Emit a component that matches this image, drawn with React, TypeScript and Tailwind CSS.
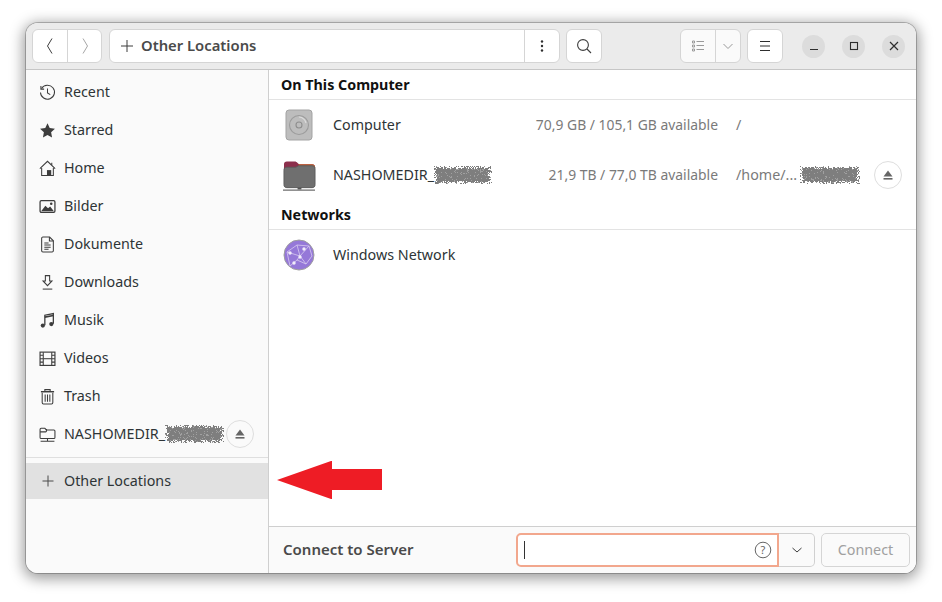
import React from "react";

const ink = "#3d3d3d";
function I({ children, size = 17, className = "" }: { children: React.ReactNode; size?: number; className?: string }) {
  return (
    <svg width={size} height={size} viewBox="0 0 16 16" fill="none" stroke={ink} strokeWidth="1" className={"shrink-0 " + className}>
      {children}
    </svg>
  );
}

function rng(seed: number) {
  let s = seed;
  return () => {
    s = (s * 16807) % 2147483647;
    return s / 2147483647;
  };
}

function Blob({ w, h = 18, seed, className = "" }: { w: number; h?: number; seed: number; className?: string }) {
  const r = rng(seed);
  const dots: React.ReactNode[] = [];
  for (let y = 0; y < h; y++) {
    for (let x = 0; x < w; x++) {
      const ex = Math.min(x, w - 1 - x) / 5;
      const ey = Math.min(y, h - 1 - y) / 4;
      const p = Math.min(1, Math.min(ex, ey) + 0.25);
      if (r() < p) dots.push(<rect key={x + "-" + y} x={x} y={y} width="1" height="1" fill={r() < 0.12 ? "#a0a0a0" : "#7e7e7e"} />);
    }
  }
  return (
    <svg width={w} height={h} viewBox={`0 0 ${w} ${h}`} className={"shrink-0 " + className}>
      {dots}
    </svg>
  );
}

const Eject = () => (
  <svg width="12" height="12" viewBox="0 0 12 12" fill="#666">
    <path d="M6 1.500 10.500 7.500H1.500Z" />
    <rect x="1.500" y="9" width="9" height="1.600" />
  </svg>
);

const sidebarIcons: Record<string, React.ReactNode> = {
  Recent: (
    <I>
      <path d="M2.400 4.200A6.600 6.600 0 1 1 1.400 8" />
      <path d="M1.800 1.800v3h3" />
      <path d="M8 4.200V8.400l2.600 1.600" />
    </I>
  ),
  Starred: (
    <I>
      <path d="M8 1.200l2.100 4.500 4.900.6-3.600 3.400.9 4.900L8 12.200l-4.300 2.400.9-4.900L1 6.300l4.900-.6z" fill={ink} stroke="none" />
    </I>
  ),
  Home: (
    <I>
      <path d="M.8 8.200 8 1.200l7.200 7" />
      <path d="M2.500 7.500v7h11v-7" />
      <path d="M12 2.600v2.200" />
      <rect x="7.500" y="9.500" width="4" height="5" fill={ink} stroke="none" />
    </I>
  ),
  Bilder: (
    <I>
      <rect x="1" y="2.500" width="14" height="11" rx="1.200" strokeWidth="1.200" />
      <path d="M2 12.500 6 7.200l2.500 2.500 2-1.800 3.500 4.600z" fill={ink} stroke="none" />
      <circle cx="11.500" cy="5.500" r="1.200" fill={ink} stroke="none" />
    </I>
  ),
  Dokumente: (
    <I>
      <path d="M2.500 2.200c0-.7.5-1.200 1.200-1.200H10l3.500 3.500v9.300c0 .7-.5 1.200-1.200 1.200H3.700c-.7 0-1.200-.5-1.200-1.200z" />
      <path d="M9.800 1v3.700h3.700" />
      <path d="M5 6.500h4M5 8.500h6M5 10.500h6M5 12.500h4" />
    </I>
  ),
  Downloads: (
    <I>
      <path d="M6 1.500h4v5h2.200L8 11 3.800 6.500H6z" />
      <path d="M3.500 14.200h9" />
    </I>
  ),
  Musik: (
    <I>
      <path d="M5.500 12.500V3l8-1.500v9.500" strokeWidth="1.200" />
      <path d="M5.500 4.800l8-1.500" strokeWidth="1.600" />
      <circle cx="3.600" cy="12.800" r="2" fill={ink} stroke="none" />
      <circle cx="11.600" cy="11.300" r="2" fill={ink} stroke="none" />
    </I>
  ),
  Videos: (
    <I>
      <rect x="1" y="2" width="14" height="12.500" strokeWidth="1.100" />
      <path d="M4 2v12.500M12 2v12.500M1 5h3M1 8.200h3M1 11.400h3M12 5h3M12 8.200h3M12 11.400h3" />
      <path d="M4 8.200h8" />
    </I>
  ),
  Trash: (
    <I>
      <path d="M3 4.500v9.200c0 .7.5 1.300 1.200 1.300h7.600c.7 0 1.200-.6 1.200-1.300V4.500" />
      <path d="M1.800 3.500h12.400" strokeWidth="1.400" />
      <path d="M5.500 3.200V1.500h5v1.700" />
      <path d="M5.800 6v7M8 6v7M10.200 6v7" />
    </I>
  ),
};

function Row({ label }: { label: string }) {
  return (
    <div className="flex h-[38px] items-center pl-[13px]">
      {sidebarIcons[label]}
      <span className="ml-[8px] text-[#2e3436]">{label}</span>
    </div>
  );
}

function RoundBtn({ children }: { children: React.ReactNode }) {
  return <div className="flex h-[23px] w-[23px] items-center justify-center rounded-full bg-[#dcdcdc]">{children}</div>;
}

export default function App() {
  return (
    <div
      className="relative h-[602px] w-[942px] overflow-hidden bg-white pl-[26px] pt-[23px] text-[14.3px] text-[#2c2c2c]"
      style={{ fontFamily: '"Noto Sans", sans-serif' }}
    >
      <div className="flex h-[550px] w-[890px] flex-col overflow-hidden rounded-[12px] bg-white shadow-[0_3px_14px_3px_rgba(0,0,0,0.38),0_0_0_1px_rgba(0,0,0,0.22)]">
        {/* header */}
        <div className="flex h-[47px] shrink-0 items-center border-b border-[#c6c6c6] bg-[#ebebeb] pl-[6px]">
          <div className="flex h-[34px] w-[70px] overflow-hidden rounded-[6px] border border-[#d5d5d5] bg-white">
            <div className="flex w-[35px] items-center justify-center border-r border-[#d5d5d5]">
              <svg width="16" height="16" viewBox="0 0 16 16" fill="none" stroke="#3d3d3d"><path d="M10 .5 5.500 8l4.500 7.500" /></svg>
            </div>
            <div className="flex flex-1 items-center justify-center">
              <svg width="16" height="16" viewBox="0 0 16 16" fill="none" stroke="#a6a6a6"><path d="M6 .5l4.500 7.500L6 15.500" /></svg>
            </div>
          </div>
          <div className="ml-[7px] flex h-[34px] w-[451px] items-center rounded-[6px] border border-[#d5d5d5] bg-white">
            <svg width="14" height="14" viewBox="0 0 14 14" stroke="#3d3d3d" className="ml-[10px]"><path d="M7 1v12M1 7h12" /></svg>
            <span className="ml-[7px] flex-1 pb-[2px] text-[14.8px] font-semibold leading-[21px] text-[#4a4a4a]">Other Locations</span>
            <div className="flex h-full w-[35px] items-center justify-center border-l border-[#d5d5d5]">
              <svg width="4" height="12" viewBox="0 0 4 12" fill="#2e2e2e"><circle cx="2" cy="1.500" r="1.200" /><circle cx="2" cy="6" r="1.200" /><circle cx="2" cy="10.500" r="1.200" /></svg>
            </div>
          </div>
          <div className="ml-[6px] flex h-[34px] w-[36px] items-center justify-center rounded-[6px] border border-[#d5d5d5] bg-white">
            <svg width="16" height="16" viewBox="0 0 16 16" fill="none" stroke="#3d3d3d" strokeWidth="1.100"><circle cx="7" cy="7" r="5.400" /><path d="M11 11l4 4" /></svg>
          </div>
          <div className="ml-[78px] flex h-[34px] w-[61px] overflow-hidden rounded-[6px] border border-[#d5d5d5] bg-[#fafafa]">
            <div className="flex w-[35px] items-center justify-center border-r border-[#d5d5d5]">
              <svg width="14" height="14" viewBox="0 0 14 14" fill="none" stroke="#9a9a9a"><path d="M1.500 2h2v2h-2zM1.500 6h2v2h-2zM1.500 10h2v2h-2zM5.500 2.500H13M5.500 6.500H13M5.500 10.500H13" /></svg>
            </div>
            <div className="flex flex-1 items-center justify-center">
              <svg width="12" height="12" viewBox="0 0 12 12" fill="none" stroke="#9a9a9a"><path d="M1.500 4 6 8.500 10.500 4" /></svg>
            </div>
          </div>
          <div className="ml-[6px] flex h-[34px] w-[36px] items-center justify-center rounded-[6px] border border-[#d5d5d5] bg-white">
            <svg width="12" height="12" viewBox="0 0 12 12" stroke="#2e2e2e"><path d="M1 1.500h10M1 6h10M1 10.500h10" /></svg>
          </div>
          <div className="ml-[19px] flex gap-[17px]">
            <RoundBtn>
              <svg width="10" height="10" viewBox="0 0 10 10" stroke="#2e2e2e" strokeWidth="1.200"><path d="M1 8.500h8" /></svg>
            </RoundBtn>
            <RoundBtn>
              <svg width="10" height="10" viewBox="0 0 10 10" fill="none" stroke="#2e2e2e" strokeWidth="1.100"><rect x="1.500" y="1.500" width="7" height="7" /></svg>
            </RoundBtn>
            <RoundBtn>
              <svg width="10" height="10" viewBox="0 0 10 10" stroke="#2e2e2e" strokeWidth="1.200"><path d="M1 1l8 8M9 1 1 9" /></svg>
            </RoundBtn>
          </div>
        </div>

        <div className="flex min-h-0 flex-1">
          {/* sidebar */}
          <div className="flex w-[243px] shrink-0 flex-col border-r border-[#cfcfcf] bg-[#fafafa] pt-[3px]">
            {["Recent", "Starred", "Home", "Bilder", "Dokumente", "Downloads", "Musik", "Videos", "Trash"].map((l) => (
              <Row key={l} label={l} />
            ))}
            <div className="flex h-[38px] items-center pl-[13px]">
              <I>
                <path d="M1 3.200c0-.6.4-1 1-1h3.500l1.500 1.500H14c.6 0 1 .4 1 1v6.100c0 .6-.4 1-1 1H2c-.6 0-1-.4-1-1z" />
                <path d="M7 2.800v2c0 .4-.3.7-.7.7H1" />
                <path d="M8 12v2M1.500 14.300h13" />
              </I>
              <span className="ml-[8px] text-[#2e3436]">NASHOMEDIR_</span>
              <Blob w={59} seed={77} />
              <div className="ml-[2px] flex h-[28px] w-[28px] items-center justify-center rounded-full border border-[#dedede]">
                <Eject />
              </div>
            </div>
            <div className="mt-[4px] h-px bg-[#dfdfdf]" />
            <div className="mt-[5px] flex h-[36px] items-center bg-[#e1e1e1] pl-[14px]">
              <svg width="16" height="16" viewBox="0 0 16 16" stroke="#4a4a4a"><path d="M8 2.500v11M2.500 8h11" /></svg>
              <span className="ml-[8px] text-[#2e3436]">Other Locations</span>
            </div>
          </div>

          {/* main */}
          <div className="flex min-w-0 flex-1 flex-col bg-white">
            <div className="flex-1">
              <div className="flex h-[30px] items-center border-b border-[#e3e3e3] pl-[12px] font-bold text-[#111]">On This Computer</div>
              <div className="flex h-[50px] items-center">
                <div className="flex w-[64px] justify-center pr-[4px]">
                  <svg width="28" height="32" viewBox="0 0 28 32">
                    <rect x="1" y="1" width="26" height="30" rx="3" fill="#bdbdbd" stroke="#a3a3a3" />
                    <circle cx="14" cy="16" r="9.500" fill="none" stroke="#9c9c9c" strokeWidth="1.100" />
                    <path d="M14 8a8 8 0 0 1 7 6" fill="none" stroke="#dcdcdc" strokeWidth="1.200" />
                    <circle cx="14" cy="16" r="3" fill="none" stroke="#8e8e8e" strokeWidth="1.100" />
                  </svg>
                </div>
                <span className="text-[#2e3436]">Computer</span>
                <span className="ml-auto w-[190px] whitespace-nowrap text-right text-[13.9px] leading-[20px] text-[#7a7a7a]">70,9 GB / 105,1 GB available</span>
                <span className="ml-[18px] w-[180px] text-[#7a7a7a]">/</span>
              </div>
              <div className="flex h-[50px] items-center">
                <div className="flex w-[64px] justify-center pr-[4px]">
                  <svg width="33" height="33" viewBox="0 0 34 33">
                    <path d="M1 5c0-2 1-3 3-3h8c1.500 0 2 .6 3 1.500L16.500 5H30c2 0 3 1 3 3v4H1z" fill="#8c2f4c" />
                    <path d="M16 5h14c2 0 3 1 3 3v2H17z" fill="#c2622f" />
                    <path d="M1 11c0-2 1-3 3-3h9c1 0 2-1 3-1.500h14c2 0 3 1 3 3V26c0 2-1 3-3 3H4c-2 0-3-1-3-3z" fill="#6f6f6f" stroke="#5c5c5c" />
                    <path d="M15 29h4v2h-4z" fill="#555" />
                    <path d="M0 31.500h33" stroke="#6c6c6c" strokeWidth="1.400" />
                  </svg>
                </div>
                <span className="text-[#2e3436]">NASHOMEDIR_</span>
                <Blob w={58} seed={901} />
                <span className="ml-auto w-[185px] whitespace-nowrap text-right text-[13.9px] leading-[20px] text-[#7a7a7a]">21,9 TB / 77,0 TB available</span>
                <span className="ml-[18px] flex w-[180px] items-center text-[#7a7a7a]">
                  /home/...
                  <Blob w={60} seed={4242} className="ml-[3px]" />
                  <span className="ml-[14px] flex h-[28px] w-[28px] shrink-0 items-center justify-center rounded-full border border-[#dedede]">
                    <Eject />
                  </span>
                </span>
              </div>
              <div className="flex h-[30px] items-center border-b border-[#e3e3e3] pl-[12px] font-bold text-[#111]">Networks</div>
              <div className="flex h-[50px] items-center">
                <div className="flex w-[64px] justify-center pr-[4px]">
                  <svg width="32" height="32" viewBox="0 0 32 32">
                    <circle cx="16" cy="16" r="15" fill="#9578d8" stroke="#a0a0a0" />
                    <path d="M4 13 14 6l12 1 3 10-6 8-9-4-7 6zM14 6l3 11 9-10M4 13l13 4 6 8M14 21l3-4" fill="none" stroke="#d9cdf0" strokeWidth="0.800" />
                    <g fill="#f1ecfa">
                      <circle cx="7" cy="14" r="1.700" />
                      <circle cx="21" cy="10" r="1.700" />
                      <circle cx="17" cy="18" r="1.700" />
                      <circle cx="11" cy="24" r="1.700" />
                    </g>
                  </svg>
                </div>
                <span className="text-[#2e3436]">Windows Network</span>
              </div>
            </div>
            <div className="flex h-[47px] shrink-0 items-center border-t border-[#cfcfcf] bg-[#fafafa] pl-[14px]">
              <span className="w-[233px] pb-[2px] text-[15px] font-semibold leading-[21px] text-[#4a4a4a]">Connect to Server</span>
              <div className="flex h-[34px] w-[263px] items-center rounded-l-[5px] border-2 border-[#f2a78d] bg-white pl-[6px] pr-[5px]">
                <div className="h-[18px] w-px bg-[#333]" />
                <svg width="18" height="18" viewBox="0 0 18 18" fill="none" stroke="#666" className="ml-auto">
                  <circle cx="9" cy="9" r="7.800" />
                  <text x="9" y="13" textAnchor="middle" fontSize="11" fill="#666" stroke="none">?</text>
                </svg>
              </div>
              <div className="flex h-[34px] w-[36px] items-center justify-center rounded-r-[5px] border border-l-0 border-[#d0d0d0] bg-[#fafafa]">
                <svg width="12" height="12" viewBox="0 0 12 12" fill="none" stroke="#3d3d3d"><path d="M1.500 4 6 8 10.500 4" /></svg>
              </div>
              <div className="ml-[6px] flex h-[34px] w-[89px] items-center justify-center rounded-[5px] border border-[#d5d5d5] bg-[#fafafa] text-[#a0a0a0]">Connect</div>
            </div>
          </div>
        </div>
      </div>
      <svg width="106" height="38" viewBox="0 0 106 38" className="absolute left-[277px] top-[461px]">
        <path d="M0 19 54 0h1v8h50v21H55v9h-1z" fill="#ee1c25" />
      </svg>
    </div>
  );
}
